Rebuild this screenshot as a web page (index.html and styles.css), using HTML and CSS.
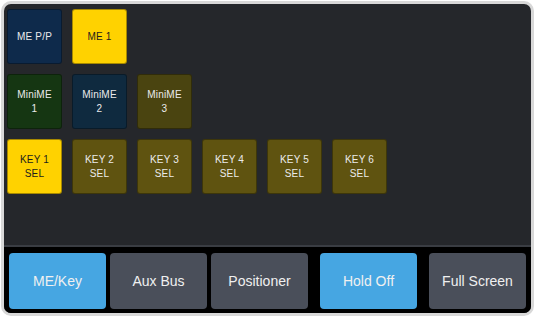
FILE: index.html
```html
<!DOCTYPE html>
<html>
  <head>
    <link rel="stylesheet" href="styles.css">
  </head>
  <body>
    <div class="frame">
      <div class="panel">
        <div class="row">
          <div class="tile tile-blue">ME P/P</div>
          <div class="tile tile-on">ME 1</div>
        </div>
        <div class="row">
          <div class="tile tile-green">MiniME<br>1</div>
          <div class="tile tile-navy">MiniME<br>2</div>
          <div class="tile tile-olive">MiniME<br>3</div>
        </div>
        <div class="row">
          <div class="tile tile-on">KEY 1<br>SEL</div>
          <div class="tile tile-key">KEY 2<br>SEL</div>
          <div class="tile tile-key">KEY 3<br>SEL</div>
          <div class="tile tile-key">KEY 4<br>SEL</div>
          <div class="tile tile-key">KEY 5<br>SEL</div>
          <div class="tile tile-key">KEY 6<br>SEL</div>
        </div>
      </div>
      <div class="tabbar">
        <div class="tab tab-active">ME/Key</div>
        <div class="tab">Aux Bus</div>
        <div class="tab">Positioner</div>
        <div class="tab tab-active tab-split">Hold Off</div>
        <div class="tab">Full Screen</div>
      </div>
    </div>
  </body>
</html>
```

FILE: styles.css
```css
:root {
  --panel-bg: #25272b;
  --frame-color: #d8d8d8;
  --tile-text: #ebebeb;
  --tile-on: #ffd200;
  --tab-active: #46a6e2;
  --tab-idle: #4a4f5a;
  --font-family: 'Liberation Sans', Arial, sans-serif;
}

html,
body {
  margin: 0;
  background: #ffffff;
}

.frame {
  margin: 1px;
  width: 533px;
  height: 315px;
  box-sizing: border-box;
  border: 3px solid var(--frame-color);
  border-radius: 10px;
  background: var(--panel-bg);
  overflow: hidden;
  display: flex;
  flex-direction: column;
  font-family: var(--font-family);
}

.panel {
  flex: 1;
  padding: 5px 3px 0;
  display: flex;
  flex-direction: column;
  gap: 10px;
  border-bottom: 2px solid #3a3d43;
}

.row {
  display: flex;
  gap: 10px;
}

.tile {
  width: 55px;
  height: 55px;
  box-sizing: border-box;
  border-radius: 3px;
  border: 1px solid rgba(0, 0, 0, 0.35);
  display: flex;
  align-items: center;
  justify-content: center;
  text-align: center;
  font-size: 10px;
  line-height: 14px;
  letter-spacing: 0.2px;
  color: var(--tile-text);
}

.tile-blue { background: #0e2a4b; }
.tile-green { background: #153612; }
.tile-navy { background: #0f2a3f; }
.tile-olive { background: #4a4410; }
.tile-key { background: #5f5310; }

.tile-on {
  background: var(--tile-on);
  color: #1d1d1d;
}

.tabbar {
  height: 66px;
  box-sizing: border-box;
  background: #000000;
  padding: 6px 5px 4px;
  display: flex;
  gap: 4px;
}

.tab {
  width: 97px;
  box-sizing: border-box;
  border-radius: 4px;
  background: var(--tab-idle);
  color: #f0f0f0;
  font-size: 14px;
  display: flex;
  align-items: center;
  justify-content: center;
}

.tab-active {
  background: var(--tab-active);
}

.tab-split {
  margin-left: 8px;
  margin-right: 8px;
}
```
